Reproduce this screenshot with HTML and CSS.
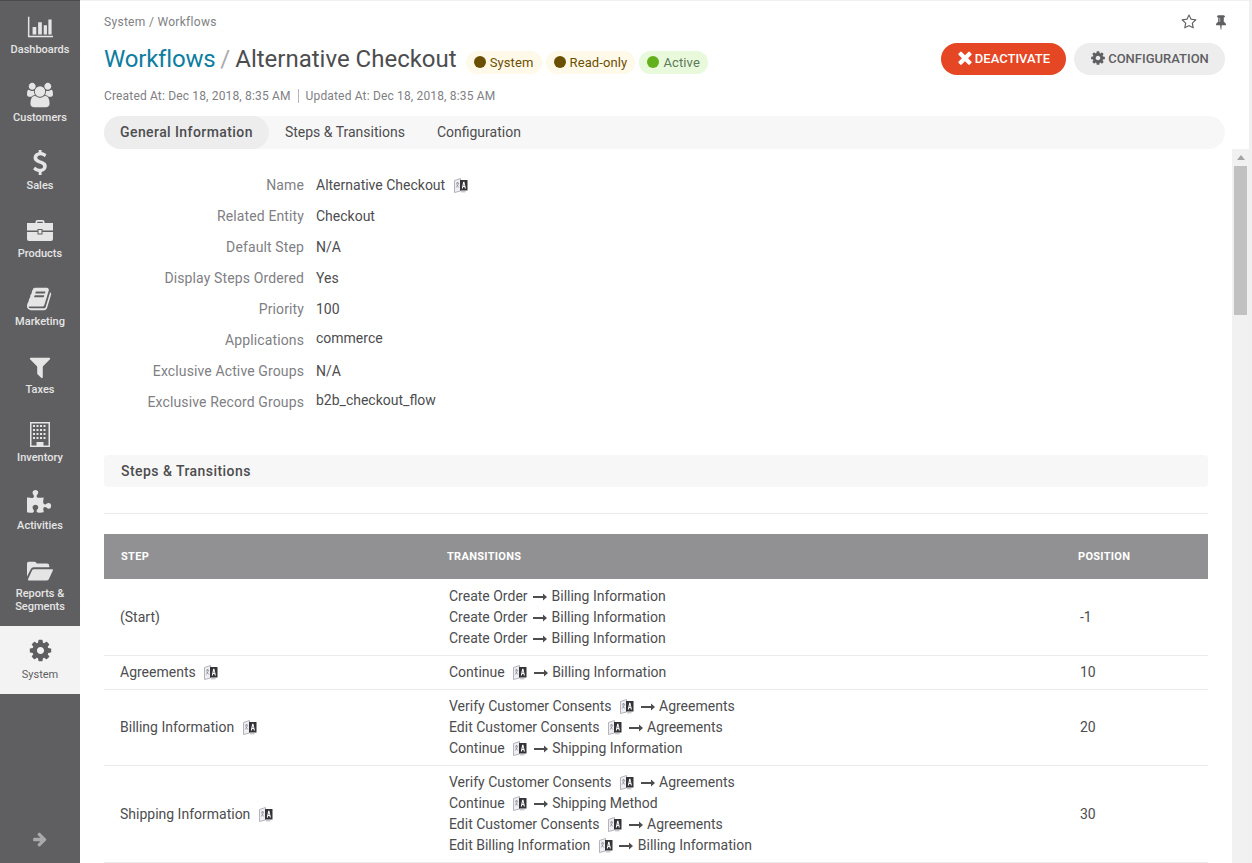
FILE: index.html
```html
<!DOCTYPE html>
<html lang="en">
  <head>
    <meta charset="UTF-8" />
    <title>Workflows - Alternative Checkout</title>
    <link rel="stylesheet" href="styles.css">
  </head>
  <body>
    <svg class="defs" width="0" height="0">
      <symbol id="i-cog" viewBox="0 0 1792 1792"><path d="M1152 896q0-106-75-181t-181-75-181 75-75 181 75 181 181 75 181-75 75-181zm512-109v222q0 12-8 23t-20 13l-185 28q-19 54-39 91 35 50 107 138 10 12 10 25t-9 23q-27 37-99 108t-94 71q-12 0-26-9l-138-108q-44 23-91 38-16 136-29 186-7 28-36 28h-222q-14 0-24.5-8.5t-11.5-21.5l-28-184q-49-16-90-37l-141 107q-10 9-25 9-14 0-25-11-126-114-165-168-7-10-7-23 0-12 8-23 15-21 51-66.5t54-70.5q-27-50-41-99l-183-27q-13-2-21-12.5t-8-23.5v-222q0-12 8-23t19-13l186-28q14-46 39-92-40-57-107-138-10-12-10-24 0-10 9-23 26-36 98.5-107.5t94.5-71.5q13 0 26 10l138 107q44-23 91-38 16-136 29-186 7-28 36-28h222q14 0 24.5 8.5t11.5 21.5l28 184q49 16 90 37l142-107q9-9 24-9 13 0 25 10 129 119 165 170 7 8 7 22 0 12-8 23-15 21-51 66.5t-54 70.5q26 50 41 98l183 28q13 2 21 12.5t8 23.5z"/></symbol>
      <symbol id="i-tr" viewBox="0 0 14 15">
        <path d="M0.500 2.500 6.500 0.500V13L0.500 14.500z" fill="#eeeef3" stroke="#a2a2ae" stroke-width="0.8"/>
        <path d="M2 5.200h3M3.500 4v1.200M2.300 9.500 4.600 5.500M2.600 6.500 4.800 9.500" fill="none" stroke="#7c7c86" stroke-width="0.7"/>
        <path d="M6 2h7.500v10.500H6z" fill="#333338"/>
        <path fill-rule="evenodd" fill="#ffffff" d="M7.800 10.500 9.200 3.800h1.200l1.500 6.700h-1.100l-.3-1.500H9.200l-.3 1.500zM9.500 8h.9l-.45-2.300z"/>
        <path d="M7 13.800h4.500" stroke="#a8a8b2" stroke-width="0.9"/>
      </symbol>
      <symbol id="i-arr" viewBox="0 0 14 8"><path d="M0 3h10V0.500L14 4l-4 3.500V5H0z"/></symbol>
    </svg>

    <nav class="sidebar">
      <a class="nav-item">
        <svg class="nav-icon" viewBox="0 0 28 24"><path d="M1 1h1.600v20.400H28V23H1z"/><path d="M6 12h4v8H6zM12 7h4v13h-4zM18 10h3.500v10H18zM23 4h3.500v16H23z"/></svg>
        <span>Dashboards</span>
      </a>
      <a class="nav-item">
        <svg class="nav-icon" viewBox="0 0 1920 1792"><path d="M593 896q-162 5-265 128h-134q-82 0-138-40.500t-56-118.500q0-353 124-353 6 0 43.500 21t97.500 42.500 119 21.500q67 0 133-23-5 37-5 66 0 139 81 256zm1071 637q0 120-73 189.500t-194 69.500h-874q-121 0-194-69.500t-73-189.500q0-53 3.500-103.500t14-109 26.500-108.500 43-97.500 62-81 85.500-53.500 111.500-20q10 0 43 21.500t73 48 107 48 135 21.500 135-21.500 107-48 73-48 43-21.500q61 0 111.500 20t85.500 53.500 62 81 43 97.500 26.500 108.500 14 109 3.500 103.500zm-1024-1277q0 106-75 181t-181 75-181-75-75-181 75-181 181-75 181 75 75 181zm704 384q0 159-112.500 271.500t-271.500 112.500-271.500-112.500-112.500-271.500 112.500-271.500 271.500-112.500 271.500 112.500 112.500 271.500zm576 225q0 78-56 118.500t-138 40.500h-134q-103-123-265-128 81-117 81-256 0-29-5-66 66 23 133 23 59 0 119-21.500t97.500-42.500 43.500-21q124 0 124 353zm-128-609q0 106-75 181t-181 75-181-75-75-181 75-181 181-75 181 75 75 181z"/></svg>
        <span>Customers</span>
      </a>
      <a class="nav-item">
        <svg class="nav-icon" viewBox="0 0 1792 1792"><path transform="translate(0 -64)" d="M1362 1185q0 153-99.500 263.500t-258.500 136.500v175q0 14-9 23t-23 9h-135q-13 0-22.500-9.500t-9.500-22.500v-175q-66-9-127.500-31t-101.500-44.500-74-48-46.500-37.500-17.500-18q-17-21-2-41l103-135q7-10 23-12 15-2 24 9l2 2q113 99 243 125 37 8 74 8 81 0 142.500-43t61.500-122q0-28-15-53t-33.500-42-58.500-37.500-66-32-80-32.500q-39-16-61.500-25t-61.500-26.500-62.500-31-56.500-35.500-53.500-42.500-43.500-49-35.500-58-21-66.500-8.500-78q0-138 98-242t255-134v-180q0-13 9.500-22.500t22.500-9.500h135q14 0 23 9t9 23v176q57 6 110.500 23t87 33.500 63.500 37.500 39 29 15 14q17 18 5 38l-81 146q-8 15-23 16-14 3-27-7-3-3-14.500-12t-39-26.500-58.500-32-74.500-26-85.500-11.500q-95 0-155 43t-60 111q0 26 8.500 48t29.500 41.500 39.500 33 56 31 60.500 27 70 27.500q53 20 81 31.500t76 35 75.500 42.500 62 50 53 63.500 31.500 76.500 13 94z"/></svg>
        <span>Sales</span>
      </a>
      <a class="nav-item">
        <svg class="nav-icon" viewBox="0 0 26 24"><path d="M8.500 4V2.800Q8.500 1 10.300 1h5.400q1.800 0 1.800 1.800V4H26v7.500H15.500V10h-5v1.500H0V4zM10.200 4h5.600V2.700h-5.600zM0 13h10.500v2.500h5V13H26v7q0 2-2 2H2q-2 0-2-2zM11.500 11h3v3.500h-3z"/></svg>
        <span>Products</span>
      </a>
      <a class="nav-item">
        <svg class="nav-icon" viewBox="0 0 1792 1792"><path d="M1639 478q40 57 18 129l-275 906q-19 64-76.500 107.500t-122.500 43.500h-923q-77 0-148.500-53.500t-99.500-131.500q-24-67-2-127 0-4 3-27t4-37q1-8-3-21.500t-3-19.500q2-11 8-21t16.500-23.500 16.500-23.500q23-38 45-91.500t30-91.500q3-10 .5-30t-.5-28q3-11 17-28t17-23q21-36 42-92t25-90q1-9-2.500-32t.5-28q4-13 22-30.500t22-22.500q19-26 42.500-84.500t27.500-96.500q1-8-3-25.500t-2-26.500q2-8 9-18t18-23 17-21q8-12 16.500-30.500t15-35 16-36 19.500-32 26.500-23.500 36-11.500 47.500 5.500l-1 3q38-9 51-9h761q74 0 114 56t18 130l-274 906q-36 119-71.500 153.500t-128.500 34.500h-869q-27 0-38 15-11 16-1 43 24 70 144 70h923q29 0 56-15.500t35-41.500l300-987q7-22 5-57 38 15 59 43zm-1064 2q-4 13 2 22.500t20 9.500h608q13 0 25.500-9.500t16.500-22.500l21-64q4-13-2-22.500t-20-9.500h-608q-13 0-25.500 9.500t-16.500 22.500zm-83 256q-4 13 2 22.500t20 9.500h608q13 0 25.500-9.500t16.500-22.500l21-64q4-13-2-22.500t-20-9.500h-608q-13 0-25.500 9.500t-16.500 22.500z"/></svg>
        <span>Marketing</span>
      </a>
      <a class="nav-item">
        <svg class="nav-icon" viewBox="0 0 1792 1792"><path d="M1595 295q17 41-14 70l-493 493v742q0 42-39 59-13 5-25 5-27 0-45-19l-256-256q-19-19-19-45v-486l-493-493q-31-29-14-70 17-39 59-39h1280q42 0 59 39z"/></svg>
        <span>Taxes</span>
      </a>
      <a class="nav-item">
        <svg class="nav-icon" viewBox="0 0 24 26"><path fill-rule="evenodd" d="M2 0h20v25H2zM3.500 1.500v22h5V20h7v3.500h5v-22z"/><path d="M5 3h2v2H5zM8.500 3h2v2h-2zM12 3h2v2h-2zM15.500 3h2v2h-2zM5 7h2v2H5zM8.500 7h2v2h-2zM12 7h2v2h-2zM15.500 7h2v2h-2zM5 11h2v2H5zM8.500 11h2v2h-2zM12 11h2v2h-2zM15.500 11h2v2h-2zM5 15h2v2H5zM8.500 15h2v2h-2zM12 15h2v2h-2zM15.500 15h2v2h-2z"/></svg>
        <span>Inventory</span>
      </a>
      <a class="nav-item">
        <svg class="nav-icon" viewBox="0 0 1792 1792"><path d="M1664 1098q0 81-44.500 135t-123.500 54q-41 0-77.500-17.500t-59-38-56.500-38-71-17.500q-110 0-110 124 0 39 16 115t15 115v5q-22 0-33 1-34 3-97.500 11.500t-115.500 13.500-98 5q-61 0-103-26.500t-42-83.500q0-37 17.500-71t38-56.500 38-59 17.500-77.500q0-79-54-123.500t-135-44.500q-84 0-143 45.500t-59 127.500q0 43 15 83t33.500 64.500 33.500 53 15 50.500q0 45-46 89-37 35-117 35-95 0-245-24-9-2-27.500-4t-27.500-4l-13-2q-1 0-3-1-2 0-2-1v-1024q2 1 17.500 3.500t34 5 21.500 3.500q150 24 245 24 80 0 117-35 46-44 46-89 0-22-15-50.500t-33.500-53-33.500-64.500-15-83q0-82 59-127.500t144-45.500q80 0 134 44.500t54 123.500q0 41-17.500 77.500t-38 59-38 56.500-17.500 71q0 57 42 83.500t103 26.500q64 0 180-15t163-17v2q-1 2-3.500 17.500t-5 34-3.500 21.500q-24 150-24 245 0 80 35 117 44 46 89 46 22 0 50.500-15t53-33.500 64.500-33.500 83-15q82 0 127.500 59t45.500 143z"/></svg>
        <span>Activities</span>
      </a>
      <a class="nav-item">
        <svg class="nav-icon" viewBox="0 0 28 22"><path d="M0 3Q0 1 2 1h6q2 0 2.500 2h11Q24 3 24 5.500V7H7Q5 7 4 9L0 17z"/><path d="M7.500 9H27q1.500 0 .8 1.500L23.500 20q-.5 1.200-2 1.200H2q-1.500 0-.8-1.500L5.500 10.200Q6 9 7.500 9z"/></svg>
        <span>Reports &amp; Segments</span>
      </a>
      <a class="nav-item active">
        <svg class="nav-icon"><use href="#i-cog"/></svg>
        <span>System</span>
      </a>
      <div class="nav-foot">
        <svg class="nav-toggle" viewBox="0 0 1792 1792"><path d="M1600 960q0 54-37 91l-651 651q-39 37-91 37-51 0-90-37l-75-75q-38-38-38-91t38-91l293-293h-704q-52 0-84.500-37.500t-32.500-90.500v-128q0-53 32.500-90.500t84.500-37.500h704l-293-294q-38-36-38-90t38-90l75-75q38-38 90-38 53 0 91 38l651 651q37 35 37 90z"/></svg>
      </div>
    </nav>

    <div class="page">
      <header class="page-head">
        <div class="crumb-row">
          <div class="crumbs">System / Workflows</div>
          <div class="head-tools">
            <svg class="tool star" viewBox="0 0 1792 1792"><path d="M1201 1004l306-297-422-62-189-382-189 382-422 62 306 297-73 421 378-199 377 199zm527-357q0 22-26 48l-363 354 86 500q1 7 1 20 0 50-41 50-19 0-40-12l-449-236-449 236q-22 12-40 12-21 0-31.500-14.500t-10.500-35.500q0-6 2-20l86-500-364-354q-25-27-25-48 0-37 56-46l502-73 225-455q19-41 49-41t49 41l225 455 502 73q56 9 56 46z"/></svg>
            <svg class="tool pin" viewBox="0 0 1152 1792"><path d="M480 867v-448q0-14-9-23t-23-9-23 9-9 23v448q0 14 9 23t23 9 23-9 9-23zm672 352q0 26-19 45t-45 19h-429l-51 483q-2 12-10.500 20.500t-20.500 8.500h-1q-27 0-32-27l-76-485h-404q-26 0-45-19t-19-45q0-123 78.500-221.500t177.500-98.500v-512q-52 0-90-38t-38-90 38-90 90-38h640q52 0 90 38t38 90-38 90-90 38v512q99 0 177.500 98.500t78.500 221.500z"/></svg>
          </div>
        </div>
        <div class="title-row">
          <h1 class="title"><a>Workflows</a> <i>/</i> Alternative Checkout</h1>
          <div class="badges">
            <span class="badge"><b></b>System</span>
            <span class="badge"><b></b>Read-only</span>
            <span class="badge badge-ok"><b></b>Active</span>
          </div>
          <div class="actions">
            <button class="btn btn-red"><svg viewBox="0 0 1408 1792"><path d="M1298 1312q0 40-28 68l-136 136q-28 28-68 28t-68-28l-294-294-294 294q-28 28-68 28t-68-28l-136-136q-28-28-28-68t28-68l294-294-294-294q-28-28-28-68t28-68l136-136q28-28 68-28t68 28l294 294 294-294q28-28 68-28t68 28l136 136q28 28 28 68t-28 68l-294 294 294 294q28 28 28 68z" transform="translate(0 -32)"/></svg>DEACTIVATE</button>
            <button class="btn btn-grey"><svg><use href="#i-cog"/></svg>CONFIGURATION</button>
          </div>
        </div>
        <div class="dates"><span>Created At: Dec 18, 2018, 8:35 AM</span><span>Updated At: Dec 18, 2018, 8:35 AM</span></div>
        <div class="tabs">
          <a class="tab active">General Information</a>
          <a class="tab">Steps &amp; Transitions</a>
          <a class="tab">Configuration</a>
        </div>
      </header>

      <div class="scroll-wrap">
        <main class="content">
          <dl class="info">
            <div class="info-row"><dt>Name</dt><dd>Alternative Checkout <svg class="tr"><use href="#i-tr"/></svg></dd></div>
            <div class="info-row"><dt>Related Entity</dt><dd>Checkout</dd></div>
            <div class="info-row"><dt>Default Step</dt><dd>N/A</dd></div>
            <div class="info-row"><dt>Display Steps Ordered</dt><dd>Yes</dd></div>
            <div class="info-row"><dt>Priority</dt><dd>100</dd></div>
            <div class="info-row"><dt>Applications</dt><dd class="raised">commerce</dd></div>
            <div class="info-row"><dt>Exclusive Active Groups</dt><dd>N/A</dd></div>
            <div class="info-row"><dt>Exclusive Record Groups</dt><dd class="raised">b2b_checkout_flow</dd></div>
          </dl>

          <h2 class="section-title">Steps &amp; Transitions</h2>
          <hr class="section-rule" />

          <table class="grid">
            <thead>
              <tr><th class="col-step">Step</th><th class="col-trans">Transitions</th><th class="col-pos">Position</th></tr>
            </thead>
            <tbody>
              <tr>
                <td>(Start)</td>
                <td class="trans">
                  <div>Create Order <svg class="arr"><use href="#i-arr"/></svg> Billing Information</div>
                  <div>Create Order <svg class="arr"><use href="#i-arr"/></svg> Billing Information</div>
                  <div>Create Order <svg class="arr"><use href="#i-arr"/></svg> Billing Information</div>
                </td>
                <td class="pos">-1</td>
              </tr>
              <tr>
                <td>Agreements <svg class="tr"><use href="#i-tr"/></svg></td>
                <td class="trans">
                  <div>Continue <svg class="tr"><use href="#i-tr"/></svg> <svg class="arr"><use href="#i-arr"/></svg> Billing Information</div>
                </td>
                <td class="pos">10</td>
              </tr>
              <tr>
                <td>Billing Information <svg class="tr"><use href="#i-tr"/></svg></td>
                <td class="trans">
                  <div>Verify Customer Consents <svg class="tr"><use href="#i-tr"/></svg> <svg class="arr"><use href="#i-arr"/></svg> Agreements</div>
                  <div>Edit Customer Consents <svg class="tr"><use href="#i-tr"/></svg> <svg class="arr"><use href="#i-arr"/></svg> Agreements</div>
                  <div>Continue <svg class="tr"><use href="#i-tr"/></svg> <svg class="arr"><use href="#i-arr"/></svg> Shipping Information</div>
                </td>
                <td class="pos">20</td>
              </tr>
              <tr>
                <td>Shipping Information <svg class="tr"><use href="#i-tr"/></svg></td>
                <td class="trans">
                  <div>Verify Customer Consents <svg class="tr"><use href="#i-tr"/></svg> <svg class="arr"><use href="#i-arr"/></svg> Agreements</div>
                  <div>Continue <svg class="tr"><use href="#i-tr"/></svg> <svg class="arr"><use href="#i-arr"/></svg> Shipping Method</div>
                  <div>Edit Customer Consents <svg class="tr"><use href="#i-tr"/></svg> <svg class="arr"><use href="#i-arr"/></svg> Agreements</div>
                  <div>Edit Billing Information <svg class="tr"><use href="#i-tr"/></svg> <svg class="arr"><use href="#i-arr"/></svg> Billing Information</div>
                </td>
                <td class="pos">30</td>
              </tr>
            </tbody>
          </table>
        </main>
        <div class="scrollbar">
          <span class="sb-up"></span>
          <span class="sb-thumb"></span>
        </div>
      </div>
    </div>
  </body>
</html>
```

FILE: styles.css
```css
html,
body {
  height: 100%;
  margin: 0;
  overflow: hidden;
}

body {
  display: flex;
  font-family: Roboto, "Liberation Sans", sans-serif;
  font-size: 14px;
  color: #4d4d4f;
  background-color: #fff;
}

.defs {
  position: absolute;
}

/* sidebar */
.sidebar {
  flex: 0 0 80px;
  display: flex;
  flex-direction: column;
  padding-top: 14px;
  box-sizing: border-box;
  border-top: 1px solid #4a4a4c;
  background-color: #5f5f61;
}

.nav-item {
  display: flex;
  flex-direction: column;
  align-items: center;
  min-height: 68px;
  box-sizing: border-box;
  margin-top: -1px;
  margin-bottom: 1px;
  font-size: 11px;
  font-weight: 500;
  line-height: 13px;
  text-align: center;
  color: #e5e5e5;
}

.nav-item span {
  margin-top: 3px;
}

.nav-icon {
  width: 26px;
  height: 26px;
  fill: #e5e5e5;
}

.nav-item.active {
  padding-top: 12px;
  background-color: #f3f3f3;
  color: #5f5f61;
  font-weight: normal;
}

.nav-item.active .nav-icon {
  width: 25px;
  height: 25px;
  margin-bottom: 2px;
  fill: #5f5f61;
}

.nav-foot {
  margin-top: auto;
  display: flex;
  justify-content: center;
  padding-bottom: 16px;
}

.nav-toggle {
  width: 16px;
  height: 16px;
  fill: #a9a9ab;
}

/* header */
.page {
  flex: 1;
  display: flex;
  flex-direction: column;
  min-width: 0;
  box-sizing: border-box;
  border-top: 1px solid #f0f0f0;
  border-right: 3px solid #f0f0f0;
}

.page-head {
  padding: 13px 24px 0 24px;
}

.crumb-row {
  display: flex;
  justify-content: space-between;
  align-items: center;
  height: 15px;
}

.crumbs {
  font-size: 12px;
  letter-spacing: 0.3px;
  color: #808084;
}

.head-tools {
  display: flex;
  align-items: center;
  gap: 19px;
  margin-right: -1px;
}

.tool {
  fill: #5f5f61;
}

.star {
  width: 16px;
  height: 16px;
}

.pin {
  width: 10px;
  height: 16px;
}

.title-row {
  display: flex;
  align-items: center;
  height: 44px;
  margin-top: 8px;
}

.title {
  margin: 0;
  font-size: 24px;
  font-weight: normal;
  color: #4d4d4f;
}

.title a {
  letter-spacing: -0.2px;
  color: #0d7e9f;
}

.title i {
  margin: 0 -1px;
  font-style: normal;
  color: #aaaaad;
}

.badges {
  display: flex;
  gap: 4px;
  margin: 6px 0 0 9px;
}

.badge {
  display: flex;
  align-items: center;
  height: 23px;
  padding: 0 8px;
  border-radius: 12px;
  background-color: #fff9ea;
  color: #6b4f00;
  font-size: 13px;
  letter-spacing: 0.12px;
}

.badge b {
  width: 12px;
  height: 12px;
  margin-right: 4px;
  border-radius: 50%;
  background-color: #6b4f00;
}

.badge-ok {
  background-color: #e9f9dc;
  color: #5d7a5a;
}

.badge-ok b {
  background-color: #62b01a;
}

.actions {
  margin-left: auto;
  display: flex;
  gap: 8px;
}

.btn {
  display: flex;
  align-items: center;
  justify-content: center;
  height: 32px;
  padding: 0 0 2px;
  border: 0;
  border-radius: 16px;
  font-family: Roboto, "Liberation Sans", sans-serif;
  font-size: 13px;
  font-weight: 500;
}

.btn svg {
  width: 16px;
  height: 16px;
  margin-right: 2px;
}

.btn-red svg {
  height: 20px;
}

.btn-red {
  width: 125px;
  background-color: #e54623;
  color: #fff;
  fill: #fff;
}

.btn-grey {
  width: 151px;
  background-color: #ededee;
  color: #5f5f61;
  fill: #5f5f61;
}

.dates {
  display: flex;
  align-items: center;
  margin-top: 8px;
  height: 14px;
  font-size: 12px;
  letter-spacing: 0.16px;
  color: #808084;
}

.dates span + span {
  margin-left: 7px;
  padding-left: 7px;
  border-left: 1px solid #b8b8ba;
}

.tabs {
  display: flex;
  margin-top: 13px;
  height: 33px;
  border-radius: 17px;
  background-color: #f7f7f7;
}

.tab {
  display: flex;
  align-items: center;
  padding: 0 16px 1px;
  border-radius: 17px;
  color: #4d4d4f;
}

.tab.active {
  background-color: #ededee;
  font-weight: 500;
  letter-spacing: 0.42px;
}

/* content */
.scroll-wrap {
  flex: 1;
  display: flex;
  min-height: 0;
  overflow: hidden;
}

.content {
  flex: 1;
  min-width: 0;
  padding: 20px 24px 0 24px;
}

.info {
  margin: 0;
}

.info-row {
  display: flex;
  height: 31px;
  align-items: center;
}

.info-row dt {
  width: 200px;
  text-align: right;
  letter-spacing: 0.12px;
  color: #808084;
}

.info-row dd {
  margin: 0 0 0 12px;
}

.info-row dd.raised {
  margin-top: -4px;
}

.tr {
  width: 14px;
  height: 15px;
  margin-left: 5px;
  margin-right: 1px;
  vertical-align: -3px;
}

.arr {
  width: 14px;
  height: 8px;
  margin: 0 1px 0 2px;
  fill: #4d4d4f;
}

.section-title {
  display: flex;
  align-items: center;
  height: 32px;
  margin: 38px 0 0;
  padding-left: 17px;
  border-radius: 4px;
  background-color: #f7f7f7;
  font-size: 14px;
  font-weight: 500;
  letter-spacing: 0.45px;
  color: #4d4d4f;
}

.section-rule {
  height: 1px;
  margin: 26px 0 20px;
  border: 0;
  background-color: #ebebeb;
}

.grid {
  width: 100%;
  border-collapse: separate;
  border-spacing: 0;
  table-layout: fixed;
}

.grid th {
  box-sizing: border-box;
  height: 45px;
  padding: 0 0 0 17px;
  background-color: #919193;
  color: #fff;
  font-size: 11px;
  font-weight: 700;
  letter-spacing: 0.3px;
  text-align: left;
  text-transform: uppercase;
}

.grid .col-step {
  width: 326px;
}

.grid .col-pos {
  width: 147px;
}

.grid td {
  padding: 6px 16px;
  line-height: 21px;
  border-bottom: 1px solid #ebebeb;
}

.grid tbody tr:first-child td {
  padding-top: 7px;
}

.grid td.trans,
.grid td.pos {
  padding-left: 19px;
}

.scrollbar {
  flex: 0 0 17px;
  display: flex;
  flex-direction: column;
  align-items: center;
  background-color: #f1f1f1;
}

.sb-up {
  width: 0;
  height: 0;
  margin-top: 6px;
  border-left: 4px solid transparent;
  border-right: 4px solid transparent;
  border-bottom: 5px solid #a3a3a3;
}

.sb-thumb {
  width: 13px;
  height: 149px;
  margin-top: 6px;
  background-color: #c1c1c1;
}
```
